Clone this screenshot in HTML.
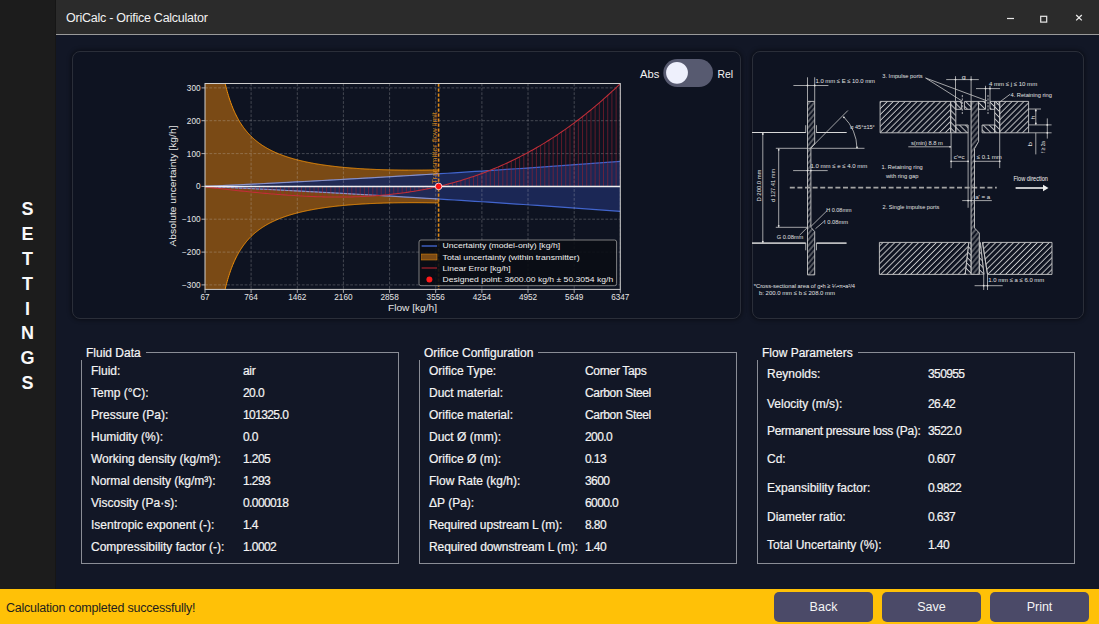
<!DOCTYPE html>
<html><head><meta charset="utf-8"><title>OriCalc - Orifice Calculator</title>
<style>
*{margin:0;padding:0;box-sizing:border-box}
html,body{width:1099px;height:624px;overflow:hidden;background:#121726;font-family:"Liberation Sans",sans-serif;color:#f0f0f0}
.abs{position:absolute}
#sidebar{left:0;top:0;width:55px;height:589px;background:#1c1c1c}
#sbedge{left:55px;top:0;width:1px;height:589px;background:#161616}
#sidebar span{position:absolute;left:0;width:55px;text-align:center;font-weight:bold;font-size:18px;color:#f8f8f8;line-height:18px}
#titlebar{left:56px;top:0;width:1044px;height:34px;background:#2b2b2b}
#titleline{left:56px;top:34px;width:1044px;height:1px;background:#9a9a9a}
#title{left:66px;top:11px;font-size:12.5px;color:#f2f2f2;white-space:nowrap;letter-spacing:-0.25px}
#main{left:56px;top:35px;width:1044px;height:554px;background:#121726}
.panel{border:1px solid #2a2e39;border-radius:8px;background:#0e1321;box-shadow:0 0 4px 1px rgba(0,0,0,0.45)}
.gb{border:1px solid #8a8d96}
.gbt{position:absolute;font-size:12px;color:#f6f6f6;-webkit-text-stroke:0.2px #f6f6f6;white-space:nowrap;background:#121726;padding:0 5px 0 5px}
.row{position:absolute;font-size:12px;color:#f4f4f4;white-space:nowrap;-webkit-text-stroke:0.2px #f4f4f4}
#status{left:0;top:589px;width:1099px;height:35px;background:#ffc107}
#stext{left:6px;top:601px;font-size:12.5px;color:#1e1e1e;white-space:nowrap;letter-spacing:-0.23px}
.btn{position:absolute;top:592px;width:99px;height:30px;background:#4b4a68;border-radius:5px;color:#f4f4f4;font-size:12.5px;text-align:center;line-height:30px}

</style></head><body>
<div id="sidebar" class="abs">
<span style="top:200.2px">S</span>
<span style="top:225.0px">E</span>
<span style="top:249.9px">T</span>
<span style="top:274.8px">T</span>
<span style="top:299.6px">I</span>
<span style="top:324.4px">N</span>
<span style="top:349.3px">G</span>
<span style="top:374.1px">S</span>
</div><div id="sbedge" class="abs"></div>
<div id="titlebar" class="abs"></div><div id="titleline" class="abs"></div>
<div id="title" class="abs">OriCalc - Orifice Calculator</div>
<svg class="abs" style="left:1000px;top:8px" width="99" height="20" viewBox="0 0 99 20"><line x1="7" y1="10.5" x2="14" y2="10.5" stroke="#e8e8e8" stroke-width="1.2"/><rect x="40.7" y="8.3" width="6" height="5.8" fill="none" stroke="#e8e8e8" stroke-width="1.2"/><path d="M76.2 7 L81.8 12.4 M81.8 7 L76.2 12.4" stroke="#ececec" stroke-width="1.25"/></svg>
<div id="main" class="abs"></div>
<div class="abs panel" style="left:72px;top:51px;width:669px;height:268px"></div>
<div class="abs panel" style="left:752px;top:51px;width:332px;height:268px"></div>
<svg class="abs" style="left:72px;top:51px" width="669" height="268" viewBox="72 51 669 268" font-family="Liberation Sans, sans-serif">
<defs><clipPath id="ax"><rect x="205.0" y="83.5" width="415.3" height="205.9"/></clipPath></defs>
<g clip-path="url(#ax)">
<polygon points="205.00,-384.45 205.58,-317.96 206.17,-265.34 206.75,-222.67 207.34,-187.36 207.92,-157.66 208.50,-132.34 209.09,-110.49 209.67,-91.44 210.26,-74.68 210.84,-59.84 211.43,-46.59 212.01,-34.69 212.59,-23.95 213.18,-14.21 213.76,-5.33 214.35,2.80 214.93,10.27 215.51,17.15 216.10,23.52 216.68,29.42 217.27,34.92 217.85,40.04 218.43,44.82 219.02,49.30 219.60,53.51 220.19,57.47 220.77,61.19 221.35,64.71 221.94,68.04 222.52,71.19 223.11,74.17 223.69,77.01 224.28,79.70 224.86,82.27 225.44,84.71 226.03,87.04 226.61,89.27 227.20,91.40 227.78,93.44 228.36,95.39 228.95,97.27 229.53,99.06 230.12,100.79 230.70,102.45 231.28,104.04 231.87,105.58 232.45,107.06 233.04,108.49 233.62,109.86 234.20,111.19 234.79,112.47 235.37,113.71 235.96,114.91 236.54,116.07 237.13,117.19 237.71,118.28 238.29,119.33 238.88,120.36 239.46,121.35 240.05,122.31 240.63,123.24 241.21,124.15 241.80,125.03 242.38,125.88 242.97,126.72 243.55,127.52 244.13,128.31 244.72,129.08 245.30,129.83 245.89,130.55 246.47,131.26 247.06,131.95 247.64,132.63 248.22,133.28 248.81,133.92 249.39,134.55 249.98,135.16 250.56,135.76 251.14,136.34 251.73,136.91 252.31,137.47 252.90,138.01 253.48,138.54 254.06,139.06 254.65,139.57 255.23,140.07 255.82,140.55 256.40,141.03 256.98,141.50 257.57,141.95 258.15,142.40 258.74,142.84 259.32,143.27 259.91,143.69 260.49,144.10 261.07,144.51 261.66,144.91 262.24,145.30 262.83,145.68 263.41,146.05 263.99,146.42 264.58,146.78 265.16,147.13 265.75,147.48 266.33,147.82 266.91,148.16 267.50,148.49 268.08,148.81 268.67,149.13 269.25,149.44 269.83,149.75 270.42,150.05 271.00,150.35 271.59,150.64 272.17,150.93 272.76,151.21 273.34,151.48 273.92,151.76 274.51,152.02 275.09,152.29 275.68,152.55 276.26,152.80 276.84,153.06 277.43,153.30 278.01,153.55 278.60,153.79 279.18,154.02 279.76,154.25 280.35,154.48 280.93,154.71 281.52,154.93 282.10,155.15 282.69,155.36 283.27,155.58 283.85,155.79 284.44,155.99 285.02,156.19 285.61,156.39 286.19,156.59 286.77,156.79 287.36,156.98 287.94,157.17 288.53,157.35 289.11,157.54 289.69,157.72 290.28,157.89 290.86,158.07 291.45,158.24 292.03,158.42 292.61,158.58 293.20,158.75 293.78,158.91 294.37,159.08 294.95,159.24 295.54,159.39 296.12,159.55 296.70,159.70 297.29,159.85 297.87,160.00 298.46,160.15 299.04,160.30 299.62,160.44 300.21,160.58 300.79,160.72 301.38,160.86 301.96,160.99 302.54,161.13 303.13,161.26 303.71,161.39 304.30,161.52 304.88,161.65 305.46,161.78 306.05,161.90 306.63,162.02 307.22,162.14 307.80,162.26 308.39,162.38 308.97,162.50 309.55,162.61 310.14,162.73 310.72,162.84 311.31,162.95 311.89,163.06 312.47,163.17 313.06,163.28 313.64,163.38 314.23,163.49 314.81,163.59 315.39,163.69 315.98,163.79 316.56,163.89 317.15,163.99 317.73,164.08 318.32,164.18 318.90,164.27 319.48,164.37 320.07,164.46 320.65,164.55 321.24,164.64 321.82,164.73 322.40,164.82 322.99,164.90 323.57,164.99 324.16,165.07 324.74,165.16 325.32,165.24 325.91,165.32 326.49,165.40 327.08,165.48 327.66,165.56 328.24,165.64 328.83,165.71 329.41,165.79 330.00,165.86 330.58,165.94 331.17,166.01 331.75,166.08 332.33,166.15 332.92,166.22 333.50,166.29 334.09,166.36 334.67,166.43 335.25,166.49 335.84,166.56 336.42,166.62 337.01,166.69 337.59,166.75 338.17,166.81 338.76,166.88 339.34,166.94 339.93,167.00 340.51,167.06 341.09,167.11 341.68,167.17 342.26,167.23 342.85,167.29 343.43,167.34 344.02,167.40 344.60,167.45 345.18,167.50 345.77,167.56 346.35,167.61 346.94,167.66 347.52,167.71 348.10,167.76 348.69,167.81 349.27,167.86 349.86,167.91 350.44,167.95 351.02,168.00 351.61,168.05 352.19,168.09 352.78,168.14 353.36,168.18 353.95,168.22 354.53,168.27 355.11,168.31 355.70,168.35 356.28,168.39 356.87,168.43 357.45,168.47 358.03,168.51 358.62,168.55 359.20,168.59 359.79,168.63 360.37,168.66 360.95,168.70 361.54,168.74 362.12,168.77 362.71,168.81 363.29,168.84 363.87,168.87 364.46,168.91 365.04,168.94 365.63,168.97 366.21,169.00 366.80,169.03 367.38,169.06 367.96,169.09 368.55,169.12 369.13,169.15 369.72,169.18 370.30,169.21 370.88,169.24 371.47,169.26 372.05,169.29 372.64,169.32 373.22,169.34 373.80,169.37 374.39,169.39 374.97,169.42 375.56,169.44 376.14,169.46 376.72,169.49 377.31,169.51 377.89,169.53 378.48,169.55 379.06,169.57 379.65,169.59 380.23,169.61 380.81,169.63 381.40,169.65 381.98,169.67 382.57,169.69 383.15,169.71 383.73,169.73 384.32,169.74 384.90,169.76 385.49,169.78 386.07,169.79 386.65,169.81 387.24,169.82 387.82,169.84 388.41,169.85 388.99,169.87 389.58,169.88 390.16,169.89 390.74,169.91 391.33,169.92 391.91,169.93 392.50,169.94 393.08,169.95 393.66,169.96 394.25,169.98 394.83,169.99 395.42,170.00 396.00,170.00 396.58,170.01 397.17,170.02 397.75,170.03 398.34,170.04 398.92,170.05 399.50,170.05 400.09,170.06 400.67,170.07 401.26,170.08 401.84,170.08 402.43,170.09 403.01,170.09 403.59,170.10 404.18,170.10 404.76,170.11 405.35,170.11 405.93,170.12 406.51,170.12 407.10,170.12 407.68,170.12 408.27,170.13 408.85,170.13 409.43,170.13 410.02,170.13 410.60,170.13 411.19,170.14 411.77,170.14 412.35,170.14 412.94,170.14 413.52,170.14 414.11,170.14 414.69,170.14 415.28,170.14 415.86,170.13 416.44,170.13 417.03,170.13 417.61,170.13 418.20,170.13 418.78,170.12 419.36,170.12 419.95,170.12 420.53,170.11 421.12,170.11 421.70,170.11 422.28,170.10 422.87,170.10 423.45,170.09 424.04,170.09 424.62,170.08 425.21,170.08 425.79,170.07 426.37,170.07 426.96,170.06 427.54,170.05 428.13,170.05 428.71,170.04 429.29,170.03 429.88,170.03 430.46,170.02 431.05,170.01 431.63,170.00 432.21,169.99 432.80,169.99 433.38,169.98 433.97,169.97 434.55,169.96 435.13,169.95 435.72,169.94 436.30,169.93 436.89,169.92 437.47,169.91 438.06,169.90 438.64,169.89 438.64,202.91 438.06,202.90 437.47,202.89 436.89,202.88 436.30,202.87 435.72,202.86 435.13,202.85 434.55,202.84 433.97,202.83 433.38,202.82 432.80,202.81 432.21,202.81 431.63,202.80 431.05,202.79 430.46,202.78 429.88,202.77 429.29,202.77 428.71,202.76 428.13,202.75 427.54,202.75 426.96,202.74 426.37,202.73 425.79,202.73 425.21,202.72 424.62,202.72 424.04,202.71 423.45,202.71 422.87,202.70 422.28,202.70 421.70,202.69 421.12,202.69 420.53,202.69 419.95,202.68 419.36,202.68 418.78,202.68 418.20,202.67 417.61,202.67 417.03,202.67 416.44,202.67 415.86,202.67 415.28,202.66 414.69,202.66 414.11,202.66 413.52,202.66 412.94,202.66 412.35,202.66 411.77,202.66 411.19,202.66 410.60,202.67 410.02,202.67 409.43,202.67 408.85,202.67 408.27,202.67 407.68,202.68 407.10,202.68 406.51,202.68 405.93,202.68 405.35,202.69 404.76,202.69 404.18,202.70 403.59,202.70 403.01,202.71 402.43,202.71 401.84,202.72 401.26,202.72 400.67,202.73 400.09,202.74 399.50,202.75 398.92,202.75 398.34,202.76 397.75,202.77 397.17,202.78 396.58,202.79 396.00,202.80 395.42,202.80 394.83,202.81 394.25,202.82 393.66,202.84 393.08,202.85 392.50,202.86 391.91,202.87 391.33,202.88 390.74,202.89 390.16,202.91 389.58,202.92 388.99,202.93 388.41,202.95 387.82,202.96 387.24,202.98 386.65,202.99 386.07,203.01 385.49,203.02 384.90,203.04 384.32,203.06 383.73,203.07 383.15,203.09 382.57,203.11 381.98,203.13 381.40,203.15 380.81,203.17 380.23,203.19 379.65,203.21 379.06,203.23 378.48,203.25 377.89,203.27 377.31,203.29 376.72,203.31 376.14,203.34 375.56,203.36 374.97,203.38 374.39,203.41 373.80,203.43 373.22,203.46 372.64,203.48 372.05,203.51 371.47,203.54 370.88,203.56 370.30,203.59 369.72,203.62 369.13,203.65 368.55,203.68 367.96,203.71 367.38,203.74 366.80,203.77 366.21,203.80 365.63,203.83 365.04,203.86 364.46,203.89 363.87,203.93 363.29,203.96 362.71,203.99 362.12,204.03 361.54,204.06 360.95,204.10 360.37,204.14 359.79,204.17 359.20,204.21 358.62,204.25 358.03,204.29 357.45,204.33 356.87,204.37 356.28,204.41 355.70,204.45 355.11,204.49 354.53,204.53 353.95,204.58 353.36,204.62 352.78,204.66 352.19,204.71 351.61,204.75 351.02,204.80 350.44,204.85 349.86,204.89 349.27,204.94 348.69,204.99 348.10,205.04 347.52,205.09 346.94,205.14 346.35,205.19 345.77,205.24 345.18,205.30 344.60,205.35 344.02,205.40 343.43,205.46 342.85,205.51 342.26,205.57 341.68,205.63 341.09,205.69 340.51,205.74 339.93,205.80 339.34,205.86 338.76,205.92 338.17,205.99 337.59,206.05 337.01,206.11 336.42,206.18 335.84,206.24 335.25,206.31 334.67,206.37 334.09,206.44 333.50,206.51 332.92,206.58 332.33,206.65 331.75,206.72 331.17,206.79 330.58,206.86 330.00,206.94 329.41,207.01 328.83,207.09 328.24,207.16 327.66,207.24 327.08,207.32 326.49,207.40 325.91,207.48 325.32,207.56 324.74,207.64 324.16,207.73 323.57,207.81 322.99,207.90 322.40,207.98 321.82,208.07 321.24,208.16 320.65,208.25 320.07,208.34 319.48,208.43 318.90,208.53 318.32,208.62 317.73,208.72 317.15,208.81 316.56,208.91 315.98,209.01 315.39,209.11 314.81,209.21 314.23,209.31 313.64,209.42 313.06,209.52 312.47,209.63 311.89,209.74 311.31,209.85 310.72,209.96 310.14,210.07 309.55,210.19 308.97,210.30 308.39,210.42 307.80,210.54 307.22,210.66 306.63,210.78 306.05,210.90 305.46,211.02 304.88,211.15 304.30,211.28 303.71,211.41 303.13,211.54 302.54,211.67 301.96,211.81 301.38,211.94 300.79,212.08 300.21,212.22 299.62,212.36 299.04,212.50 298.46,212.65 297.87,212.80 297.29,212.95 296.70,213.10 296.12,213.25 295.54,213.41 294.95,213.56 294.37,213.72 293.78,213.89 293.20,214.05 292.61,214.22 292.03,214.38 291.45,214.56 290.86,214.73 290.28,214.91 289.69,215.08 289.11,215.26 288.53,215.45 287.94,215.63 287.36,215.82 286.77,216.01 286.19,216.21 285.61,216.41 285.02,216.61 284.44,216.81 283.85,217.01 283.27,217.22 282.69,217.44 282.10,217.65 281.52,217.87 280.93,218.09 280.35,218.32 279.76,218.55 279.18,218.78 278.60,219.01 278.01,219.25 277.43,219.50 276.84,219.74 276.26,220.00 275.68,220.25 275.09,220.51 274.51,220.78 273.92,221.04 273.34,221.32 272.76,221.59 272.17,221.87 271.59,222.16 271.00,222.45 270.42,222.75 269.83,223.05 269.25,223.36 268.67,223.67 268.08,223.99 267.50,224.31 266.91,224.64 266.33,224.98 265.75,225.32 265.16,225.67 264.58,226.02 263.99,226.38 263.41,226.75 262.83,227.12 262.24,227.50 261.66,227.89 261.07,228.29 260.49,228.70 259.91,229.11 259.32,229.53 258.74,229.96 258.15,230.40 257.57,230.85 256.98,231.30 256.40,231.77 255.82,232.25 255.23,232.73 254.65,233.23 254.06,233.74 253.48,234.26 252.90,234.79 252.31,235.33 251.73,235.89 251.14,236.46 250.56,237.04 249.98,237.64 249.39,238.25 248.81,238.88 248.22,239.52 247.64,240.17 247.06,240.85 246.47,241.54 245.89,242.25 245.30,242.97 244.72,243.72 244.13,244.49 243.55,245.28 242.97,246.08 242.38,246.92 241.80,247.77 241.21,248.65 240.63,249.56 240.05,250.49 239.46,251.45 238.88,252.44 238.29,253.47 237.71,254.52 237.13,255.61 236.54,256.73 235.96,257.89 235.37,259.09 234.79,260.33 234.20,261.61 233.62,262.94 233.04,264.31 232.45,265.74 231.87,267.22 231.28,268.76 230.70,270.35 230.12,272.01 229.53,273.74 228.95,275.53 228.36,277.41 227.78,279.36 227.20,281.40 226.61,283.53 226.03,285.76 225.44,288.09 224.86,290.53 224.28,293.10 223.69,295.79 223.11,298.63 222.52,301.61 221.94,304.76 221.35,308.09 220.77,311.61 220.19,315.33 219.60,319.29 219.02,323.50 218.43,327.98 217.85,332.76 217.27,337.88 216.68,343.38 216.10,349.28 215.51,355.65 214.93,362.53 214.35,370.00 213.76,378.13 213.18,387.01 212.59,396.75 212.01,407.49 211.43,419.39 210.84,432.64 210.26,447.48 209.67,464.24 209.09,483.29 208.50,505.14 207.92,530.46 207.34,560.16 206.75,595.47 206.17,638.14 205.58,690.76 205.00,757.25" fill="#7a4a15"/>
<polyline points="205.00,-384.45 205.58,-317.96 206.17,-265.34 206.75,-222.67 207.34,-187.36 207.92,-157.66 208.50,-132.34 209.09,-110.49 209.67,-91.44 210.26,-74.68 210.84,-59.84 211.43,-46.59 212.01,-34.69 212.59,-23.95 213.18,-14.21 213.76,-5.33 214.35,2.80 214.93,10.27 215.51,17.15 216.10,23.52 216.68,29.42 217.27,34.92 217.85,40.04 218.43,44.82 219.02,49.30 219.60,53.51 220.19,57.47 220.77,61.19 221.35,64.71 221.94,68.04 222.52,71.19 223.11,74.17 223.69,77.01 224.28,79.70 224.86,82.27 225.44,84.71 226.03,87.04 226.61,89.27 227.20,91.40 227.78,93.44 228.36,95.39 228.95,97.27 229.53,99.06 230.12,100.79 230.70,102.45 231.28,104.04 231.87,105.58 232.45,107.06 233.04,108.49 233.62,109.86 234.20,111.19 234.79,112.47 235.37,113.71 235.96,114.91 236.54,116.07 237.13,117.19 237.71,118.28 238.29,119.33 238.88,120.36 239.46,121.35 240.05,122.31 240.63,123.24 241.21,124.15 241.80,125.03 242.38,125.88 242.97,126.72 243.55,127.52 244.13,128.31 244.72,129.08 245.30,129.83 245.89,130.55 246.47,131.26 247.06,131.95 247.64,132.63 248.22,133.28 248.81,133.92 249.39,134.55 249.98,135.16 250.56,135.76 251.14,136.34 251.73,136.91 252.31,137.47 252.90,138.01 253.48,138.54 254.06,139.06 254.65,139.57 255.23,140.07 255.82,140.55 256.40,141.03 256.98,141.50 257.57,141.95 258.15,142.40 258.74,142.84 259.32,143.27 259.91,143.69 260.49,144.10 261.07,144.51 261.66,144.91 262.24,145.30 262.83,145.68 263.41,146.05 263.99,146.42 264.58,146.78 265.16,147.13 265.75,147.48 266.33,147.82 266.91,148.16 267.50,148.49 268.08,148.81 268.67,149.13 269.25,149.44 269.83,149.75 270.42,150.05 271.00,150.35 271.59,150.64 272.17,150.93 272.76,151.21 273.34,151.48 273.92,151.76 274.51,152.02 275.09,152.29 275.68,152.55 276.26,152.80 276.84,153.06 277.43,153.30 278.01,153.55 278.60,153.79 279.18,154.02 279.76,154.25 280.35,154.48 280.93,154.71 281.52,154.93 282.10,155.15 282.69,155.36 283.27,155.58 283.85,155.79 284.44,155.99 285.02,156.19 285.61,156.39 286.19,156.59 286.77,156.79 287.36,156.98 287.94,157.17 288.53,157.35 289.11,157.54 289.69,157.72 290.28,157.89 290.86,158.07 291.45,158.24 292.03,158.42 292.61,158.58 293.20,158.75 293.78,158.91 294.37,159.08 294.95,159.24 295.54,159.39 296.12,159.55 296.70,159.70 297.29,159.85 297.87,160.00 298.46,160.15 299.04,160.30 299.62,160.44 300.21,160.58 300.79,160.72 301.38,160.86 301.96,160.99 302.54,161.13 303.13,161.26 303.71,161.39 304.30,161.52 304.88,161.65 305.46,161.78 306.05,161.90 306.63,162.02 307.22,162.14 307.80,162.26 308.39,162.38 308.97,162.50 309.55,162.61 310.14,162.73 310.72,162.84 311.31,162.95 311.89,163.06 312.47,163.17 313.06,163.28 313.64,163.38 314.23,163.49 314.81,163.59 315.39,163.69 315.98,163.79 316.56,163.89 317.15,163.99 317.73,164.08 318.32,164.18 318.90,164.27 319.48,164.37 320.07,164.46 320.65,164.55 321.24,164.64 321.82,164.73 322.40,164.82 322.99,164.90 323.57,164.99 324.16,165.07 324.74,165.16 325.32,165.24 325.91,165.32 326.49,165.40 327.08,165.48 327.66,165.56 328.24,165.64 328.83,165.71 329.41,165.79 330.00,165.86 330.58,165.94 331.17,166.01 331.75,166.08 332.33,166.15 332.92,166.22 333.50,166.29 334.09,166.36 334.67,166.43 335.25,166.49 335.84,166.56 336.42,166.62 337.01,166.69 337.59,166.75 338.17,166.81 338.76,166.88 339.34,166.94 339.93,167.00 340.51,167.06 341.09,167.11 341.68,167.17 342.26,167.23 342.85,167.29 343.43,167.34 344.02,167.40 344.60,167.45 345.18,167.50 345.77,167.56 346.35,167.61 346.94,167.66 347.52,167.71 348.10,167.76 348.69,167.81 349.27,167.86 349.86,167.91 350.44,167.95 351.02,168.00 351.61,168.05 352.19,168.09 352.78,168.14 353.36,168.18 353.95,168.22 354.53,168.27 355.11,168.31 355.70,168.35 356.28,168.39 356.87,168.43 357.45,168.47 358.03,168.51 358.62,168.55 359.20,168.59 359.79,168.63 360.37,168.66 360.95,168.70 361.54,168.74 362.12,168.77 362.71,168.81 363.29,168.84 363.87,168.87 364.46,168.91 365.04,168.94 365.63,168.97 366.21,169.00 366.80,169.03 367.38,169.06 367.96,169.09 368.55,169.12 369.13,169.15 369.72,169.18 370.30,169.21 370.88,169.24 371.47,169.26 372.05,169.29 372.64,169.32 373.22,169.34 373.80,169.37 374.39,169.39 374.97,169.42 375.56,169.44 376.14,169.46 376.72,169.49 377.31,169.51 377.89,169.53 378.48,169.55 379.06,169.57 379.65,169.59 380.23,169.61 380.81,169.63 381.40,169.65 381.98,169.67 382.57,169.69 383.15,169.71 383.73,169.73 384.32,169.74 384.90,169.76 385.49,169.78 386.07,169.79 386.65,169.81 387.24,169.82 387.82,169.84 388.41,169.85 388.99,169.87 389.58,169.88 390.16,169.89 390.74,169.91 391.33,169.92 391.91,169.93 392.50,169.94 393.08,169.95 393.66,169.96 394.25,169.98 394.83,169.99 395.42,170.00 396.00,170.00 396.58,170.01 397.17,170.02 397.75,170.03 398.34,170.04 398.92,170.05 399.50,170.05 400.09,170.06 400.67,170.07 401.26,170.08 401.84,170.08 402.43,170.09 403.01,170.09 403.59,170.10 404.18,170.10 404.76,170.11 405.35,170.11 405.93,170.12 406.51,170.12 407.10,170.12 407.68,170.12 408.27,170.13 408.85,170.13 409.43,170.13 410.02,170.13 410.60,170.13 411.19,170.14 411.77,170.14 412.35,170.14 412.94,170.14 413.52,170.14 414.11,170.14 414.69,170.14 415.28,170.14 415.86,170.13 416.44,170.13 417.03,170.13 417.61,170.13 418.20,170.13 418.78,170.12 419.36,170.12 419.95,170.12 420.53,170.11 421.12,170.11 421.70,170.11 422.28,170.10 422.87,170.10 423.45,170.09 424.04,170.09 424.62,170.08 425.21,170.08 425.79,170.07 426.37,170.07 426.96,170.06 427.54,170.05 428.13,170.05 428.71,170.04 429.29,170.03 429.88,170.03 430.46,170.02 431.05,170.01 431.63,170.00 432.21,169.99 432.80,169.99 433.38,169.98 433.97,169.97 434.55,169.96 435.13,169.95 435.72,169.94 436.30,169.93 436.89,169.92 437.47,169.91 438.06,169.90 438.64,169.89" fill="none" stroke="#f0900a" stroke-width="1"/>
<polyline points="438.64,202.91 438.06,202.90 437.47,202.89 436.89,202.88 436.30,202.87 435.72,202.86 435.13,202.85 434.55,202.84 433.97,202.83 433.38,202.82 432.80,202.81 432.21,202.81 431.63,202.80 431.05,202.79 430.46,202.78 429.88,202.77 429.29,202.77 428.71,202.76 428.13,202.75 427.54,202.75 426.96,202.74 426.37,202.73 425.79,202.73 425.21,202.72 424.62,202.72 424.04,202.71 423.45,202.71 422.87,202.70 422.28,202.70 421.70,202.69 421.12,202.69 420.53,202.69 419.95,202.68 419.36,202.68 418.78,202.68 418.20,202.67 417.61,202.67 417.03,202.67 416.44,202.67 415.86,202.67 415.28,202.66 414.69,202.66 414.11,202.66 413.52,202.66 412.94,202.66 412.35,202.66 411.77,202.66 411.19,202.66 410.60,202.67 410.02,202.67 409.43,202.67 408.85,202.67 408.27,202.67 407.68,202.68 407.10,202.68 406.51,202.68 405.93,202.68 405.35,202.69 404.76,202.69 404.18,202.70 403.59,202.70 403.01,202.71 402.43,202.71 401.84,202.72 401.26,202.72 400.67,202.73 400.09,202.74 399.50,202.75 398.92,202.75 398.34,202.76 397.75,202.77 397.17,202.78 396.58,202.79 396.00,202.80 395.42,202.80 394.83,202.81 394.25,202.82 393.66,202.84 393.08,202.85 392.50,202.86 391.91,202.87 391.33,202.88 390.74,202.89 390.16,202.91 389.58,202.92 388.99,202.93 388.41,202.95 387.82,202.96 387.24,202.98 386.65,202.99 386.07,203.01 385.49,203.02 384.90,203.04 384.32,203.06 383.73,203.07 383.15,203.09 382.57,203.11 381.98,203.13 381.40,203.15 380.81,203.17 380.23,203.19 379.65,203.21 379.06,203.23 378.48,203.25 377.89,203.27 377.31,203.29 376.72,203.31 376.14,203.34 375.56,203.36 374.97,203.38 374.39,203.41 373.80,203.43 373.22,203.46 372.64,203.48 372.05,203.51 371.47,203.54 370.88,203.56 370.30,203.59 369.72,203.62 369.13,203.65 368.55,203.68 367.96,203.71 367.38,203.74 366.80,203.77 366.21,203.80 365.63,203.83 365.04,203.86 364.46,203.89 363.87,203.93 363.29,203.96 362.71,203.99 362.12,204.03 361.54,204.06 360.95,204.10 360.37,204.14 359.79,204.17 359.20,204.21 358.62,204.25 358.03,204.29 357.45,204.33 356.87,204.37 356.28,204.41 355.70,204.45 355.11,204.49 354.53,204.53 353.95,204.58 353.36,204.62 352.78,204.66 352.19,204.71 351.61,204.75 351.02,204.80 350.44,204.85 349.86,204.89 349.27,204.94 348.69,204.99 348.10,205.04 347.52,205.09 346.94,205.14 346.35,205.19 345.77,205.24 345.18,205.30 344.60,205.35 344.02,205.40 343.43,205.46 342.85,205.51 342.26,205.57 341.68,205.63 341.09,205.69 340.51,205.74 339.93,205.80 339.34,205.86 338.76,205.92 338.17,205.99 337.59,206.05 337.01,206.11 336.42,206.18 335.84,206.24 335.25,206.31 334.67,206.37 334.09,206.44 333.50,206.51 332.92,206.58 332.33,206.65 331.75,206.72 331.17,206.79 330.58,206.86 330.00,206.94 329.41,207.01 328.83,207.09 328.24,207.16 327.66,207.24 327.08,207.32 326.49,207.40 325.91,207.48 325.32,207.56 324.74,207.64 324.16,207.73 323.57,207.81 322.99,207.90 322.40,207.98 321.82,208.07 321.24,208.16 320.65,208.25 320.07,208.34 319.48,208.43 318.90,208.53 318.32,208.62 317.73,208.72 317.15,208.81 316.56,208.91 315.98,209.01 315.39,209.11 314.81,209.21 314.23,209.31 313.64,209.42 313.06,209.52 312.47,209.63 311.89,209.74 311.31,209.85 310.72,209.96 310.14,210.07 309.55,210.19 308.97,210.30 308.39,210.42 307.80,210.54 307.22,210.66 306.63,210.78 306.05,210.90 305.46,211.02 304.88,211.15 304.30,211.28 303.71,211.41 303.13,211.54 302.54,211.67 301.96,211.81 301.38,211.94 300.79,212.08 300.21,212.22 299.62,212.36 299.04,212.50 298.46,212.65 297.87,212.80 297.29,212.95 296.70,213.10 296.12,213.25 295.54,213.41 294.95,213.56 294.37,213.72 293.78,213.89 293.20,214.05 292.61,214.22 292.03,214.38 291.45,214.56 290.86,214.73 290.28,214.91 289.69,215.08 289.11,215.26 288.53,215.45 287.94,215.63 287.36,215.82 286.77,216.01 286.19,216.21 285.61,216.41 285.02,216.61 284.44,216.81 283.85,217.01 283.27,217.22 282.69,217.44 282.10,217.65 281.52,217.87 280.93,218.09 280.35,218.32 279.76,218.55 279.18,218.78 278.60,219.01 278.01,219.25 277.43,219.50 276.84,219.74 276.26,220.00 275.68,220.25 275.09,220.51 274.51,220.78 273.92,221.04 273.34,221.32 272.76,221.59 272.17,221.87 271.59,222.16 271.00,222.45 270.42,222.75 269.83,223.05 269.25,223.36 268.67,223.67 268.08,223.99 267.50,224.31 266.91,224.64 266.33,224.98 265.75,225.32 265.16,225.67 264.58,226.02 263.99,226.38 263.41,226.75 262.83,227.12 262.24,227.50 261.66,227.89 261.07,228.29 260.49,228.70 259.91,229.11 259.32,229.53 258.74,229.96 258.15,230.40 257.57,230.85 256.98,231.30 256.40,231.77 255.82,232.25 255.23,232.73 254.65,233.23 254.06,233.74 253.48,234.26 252.90,234.79 252.31,235.33 251.73,235.89 251.14,236.46 250.56,237.04 249.98,237.64 249.39,238.25 248.81,238.88 248.22,239.52 247.64,240.17 247.06,240.85 246.47,241.54 245.89,242.25 245.30,242.97 244.72,243.72 244.13,244.49 243.55,245.28 242.97,246.08 242.38,246.92 241.80,247.77 241.21,248.65 240.63,249.56 240.05,250.49 239.46,251.45 238.88,252.44 238.29,253.47 237.71,254.52 237.13,255.61 236.54,256.73 235.96,257.89 235.37,259.09 234.79,260.33 234.20,261.61 233.62,262.94 233.04,264.31 232.45,265.74 231.87,267.22 231.28,268.76 230.70,270.35 230.12,272.01 229.53,273.74 228.95,275.53 228.36,277.41 227.78,279.36 227.20,281.40 226.61,283.53 226.03,285.76 225.44,288.09 224.86,290.53 224.28,293.10 223.69,295.79 223.11,298.63 222.52,301.61 221.94,304.76 221.35,308.09 220.77,311.61 220.19,315.33 219.60,319.29 219.02,323.50 218.43,327.98 217.85,332.76 217.27,337.88 216.68,343.38 216.10,349.28 215.51,355.65 214.93,362.53 214.35,370.00 213.76,378.13 213.18,387.01 212.59,396.75 212.01,407.49 211.43,419.39 210.84,432.64 210.26,447.48 209.67,464.24 209.09,483.29 208.50,505.14 207.92,530.46 207.34,560.16 206.75,595.47 206.17,638.14 205.58,690.76 205.00,757.25" fill="none" stroke="#f0900a" stroke-width="1"/>
<polygon points="205.00,186.40 211.92,186.08 218.84,185.75 225.76,185.42 232.69,185.09 239.61,184.75 246.53,184.42 253.45,184.07 260.37,183.73 267.30,183.38 274.22,183.03 281.14,182.68 288.06,182.32 294.98,181.96 301.90,181.59 308.82,181.23 315.75,180.86 322.67,180.48 329.59,180.11 336.51,179.73 343.43,179.34 350.36,178.96 357.28,178.57 364.20,178.18 371.12,177.78 378.04,177.38 384.96,176.98 391.88,176.58 398.81,176.17 405.73,175.76 412.65,175.34 419.57,174.93 426.49,174.51 433.41,174.08 440.34,173.66 447.26,173.23 454.18,172.79 461.10,172.36 468.02,171.92 474.94,171.47 481.87,171.03 488.79,170.58 495.71,170.13 502.63,169.67 509.55,169.21 516.47,168.75 523.40,168.29 530.32,167.82 537.24,167.35 544.16,166.87 551.08,166.40 558.00,165.91 564.93,165.43 571.85,164.94 578.77,164.45 585.69,163.96 592.61,163.46 599.53,162.97 606.46,162.46 613.38,161.96 620.30,161.45 620.30,211.35 613.38,210.84 606.46,210.34 599.53,209.83 592.61,209.34 585.69,208.84 578.77,208.35 571.85,207.86 564.93,207.37 558.00,206.89 551.08,206.40 544.16,205.93 537.24,205.45 530.32,204.98 523.40,204.51 516.47,204.05 509.55,203.59 502.63,203.13 495.71,202.67 488.79,202.22 481.87,201.77 474.94,201.33 468.02,200.88 461.10,200.44 454.18,200.01 447.26,199.57 440.34,199.14 433.41,198.72 426.49,198.29 419.57,197.87 412.65,197.46 405.73,197.04 398.81,196.63 391.88,196.22 384.96,195.82 378.04,195.42 371.12,195.02 364.20,194.62 357.28,194.23 350.36,193.84 343.43,193.46 336.51,193.07 329.59,192.69 322.67,192.32 315.75,191.94 308.82,191.57 301.90,191.21 294.98,190.84 288.06,190.48 281.14,190.12 274.22,189.77 267.30,189.42 260.37,189.07 253.45,188.73 246.53,188.38 239.61,188.05 232.69,187.71 225.76,187.38 218.84,187.05 211.92,186.72 205.00,186.40" fill="#1c2858" fill-opacity="0.95"/>
<polyline points="205.00,186.40 211.92,186.08 218.84,185.75 225.76,185.42 232.69,185.09 239.61,184.75 246.53,184.42 253.45,184.07 260.37,183.73 267.30,183.38 274.22,183.03 281.14,182.68 288.06,182.32 294.98,181.96 301.90,181.59 308.82,181.23 315.75,180.86 322.67,180.48 329.59,180.11 336.51,179.73 343.43,179.34 350.36,178.96 357.28,178.57 364.20,178.18 371.12,177.78 378.04,177.38 384.96,176.98 391.88,176.58 398.81,176.17 405.73,175.76 412.65,175.34 419.57,174.93 426.49,174.51 433.41,174.08 440.34,173.66 447.26,173.23 454.18,172.79 461.10,172.36 468.02,171.92 474.94,171.47 481.87,171.03 488.79,170.58 495.71,170.13 502.63,169.67 509.55,169.21 516.47,168.75 523.40,168.29 530.32,167.82 537.24,167.35 544.16,166.87 551.08,166.40 558.00,165.91 564.93,165.43 571.85,164.94 578.77,164.45 585.69,163.96 592.61,163.46 599.53,162.97 606.46,162.46 613.38,161.96 620.30,161.45" fill="none" stroke="#4a72e8" stroke-width="1.2" stroke-opacity="0.85"/>
<polyline points="620.30,211.35 613.38,210.84 606.46,210.34 599.53,209.83 592.61,209.34 585.69,208.84 578.77,208.35 571.85,207.86 564.93,207.37 558.00,206.89 551.08,206.40 544.16,205.93 537.24,205.45 530.32,204.98 523.40,204.51 516.47,204.05 509.55,203.59 502.63,203.13 495.71,202.67 488.79,202.22 481.87,201.77 474.94,201.33 468.02,200.88 461.10,200.44 454.18,200.01 447.26,199.57 440.34,199.14 433.41,198.72 426.49,198.29 419.57,197.87 412.65,197.46 405.73,197.04 398.81,196.63 391.88,196.22 384.96,195.82 378.04,195.42 371.12,195.02 364.20,194.62 357.28,194.23 350.36,193.84 343.43,193.46 336.51,193.07 329.59,192.69 322.67,192.32 315.75,191.94 308.82,191.57 301.90,191.21 294.98,190.84 288.06,190.48 281.14,190.12 274.22,189.77 267.30,189.42 260.37,189.07 253.45,188.73 246.53,188.38 239.61,188.05 232.69,187.71 225.76,187.38 218.84,187.05 211.92,186.72 205.00,186.40" fill="none" stroke="#4a72e8" stroke-width="1.2" stroke-opacity="0.85"/>
<polyline points="205.00,186.40 210.84,186.13 216.68,185.85 222.52,185.58 228.36,185.30 234.20,185.02 240.05,184.73 245.89,184.45 251.73,184.16 257.57,183.87 263.41,183.58 269.25,183.28 275.09,182.99 280.93,182.69 286.77,182.38 292.61,182.08 298.46,181.78 304.30,181.47 310.14,181.16 315.98,180.84 321.82,180.53 327.66,180.21 333.50,179.89 339.34,179.57 345.18,179.25 351.02,178.92 356.87,178.59 362.71,178.26 368.55,177.93 374.39,177.59 380.23,177.26 386.07,176.92 391.91,176.58 397.75,176.23 403.59,175.89 409.43,175.54 415.28,175.19 421.12,174.83 426.96,174.48 432.80,174.12 438.64,173.76" fill="none" stroke="#d8c0b8" stroke-width="0.9" stroke-opacity="0.55"/>
<polyline points="205.00,186.40 210.84,186.67 216.68,186.95 222.52,187.22 228.36,187.50 234.20,187.78 240.05,188.07 245.89,188.35 251.73,188.64 257.57,188.93 263.41,189.22 269.25,189.52 275.09,189.81 280.93,190.11 286.77,190.42 292.61,190.72 298.46,191.02 304.30,191.33 310.14,191.64 315.98,191.96 321.82,192.27 327.66,192.59 333.50,192.91 339.34,193.23 345.18,193.55 351.02,193.88 356.87,194.21 362.71,194.54 368.55,194.87 374.39,195.21 380.23,195.54 386.07,195.88 391.91,196.22 397.75,196.57 403.59,196.91 409.43,197.26 415.28,197.61 421.12,197.97 426.96,198.32 432.80,198.68 438.64,199.04" fill="none" stroke="#d8c0b8" stroke-width="0.9" stroke-opacity="0.55"/>
<path d="M251.1 83.5V289.4M297.3 83.5V289.4M343.4 83.5V289.4M389.6 83.5V289.4M435.7 83.5V289.4M481.9 83.5V289.4M528.0 83.5V289.4M574.2 83.5V289.4M620.3 83.5V289.4M205.0 284.9H620.3M205.0 252.1H620.3M205.0 219.2H620.3M205.0 186.4H620.3M205.0 153.6H620.3M205.0 120.7H620.3M205.0 87.9H620.3" stroke="#d0d0d0" stroke-opacity="0.4" stroke-width="0.7" stroke-dasharray="2.8,1.6" fill="none"/>
<path d="M205.00 186.40V186.91M209.19 186.40V187.40M213.39 186.40V187.89M217.58 186.40V188.37M221.78 186.40V188.84M225.97 186.40V189.32M230.17 186.40V189.79M234.36 186.40V190.25M238.56 186.40V190.70M242.75 186.40V191.15M246.95 186.40V191.58M251.14 186.40V192.01M255.34 186.40V192.43M259.53 186.40V192.83M263.73 186.40V193.22M267.92 186.40V193.60M272.12 186.40V193.96M276.31 186.40V194.31M280.51 186.40V194.64M284.70 186.40V194.95M288.90 186.40V195.25M293.09 186.40V195.52M297.29 186.40V195.78M301.48 186.40V196.02M305.68 186.40V196.23M309.87 186.40V196.42M314.07 186.40V196.59M318.26 186.40V196.73M322.46 186.40V196.85M326.65 186.40V196.94M330.85 186.40V197.00M335.04 186.40V197.04M339.24 186.40V197.04M343.43 186.40V197.02M347.63 186.40V196.96M351.82 186.40V196.88M356.02 186.40V196.76M360.21 186.40V196.61M364.41 186.40V196.42M368.60 186.40V196.20M372.80 186.40V195.94M376.99 186.40V195.64M381.19 186.40V195.30M385.38 186.40V194.93M389.58 186.40V194.52M393.77 186.40V194.06M397.97 186.40V193.57M402.16 186.40V193.03M406.36 186.40V192.44M410.55 186.40V191.82M414.75 186.40V191.14M418.94 186.40V190.42M423.14 186.40V189.66M427.33 186.40V188.84M431.53 186.40V187.98M435.72 186.40V187.07M439.92 186.40V186.10M444.11 186.40V185.08M448.31 186.40V184.02M452.50 186.40V182.89M456.70 186.40V181.72M460.89 186.40V180.48M465.09 186.40V179.19M469.28 186.40V177.85M473.48 186.40V176.44M477.67 186.40V174.98M481.87 186.40V173.46M486.06 186.40V171.87M490.26 186.40V170.23M494.45 186.40V168.52M498.65 186.40V166.74M502.84 186.40V164.91M507.04 186.40V163.00M511.23 186.40V161.04M515.43 186.40V159.00M519.62 186.40V156.90M523.82 186.40V154.72M528.01 186.40V152.48M532.21 186.40V150.17M536.40 186.40V147.78M540.60 186.40V145.32M544.79 186.40V142.79M548.99 186.40V140.18M553.18 186.40V137.50M557.38 186.40V134.74M561.57 186.40V131.91M565.77 186.40V129.00M569.96 186.40V126.00M574.16 186.40V122.93M578.35 186.40V119.78M582.55 186.40V116.54M586.74 186.40V113.22M590.94 186.40V109.82M595.13 186.40V106.34M599.33 186.40V102.77M603.52 186.40V99.11M607.72 186.40V95.36M611.91 186.40V91.53M616.11 186.40V87.61M620.30 186.40V83.60" stroke="#a02030" stroke-opacity="0.75" stroke-width="0.75" fill="none"/>
<polyline points="205.00,186.91 207.08,187.16 209.15,187.40 211.23,187.64 213.31,187.88 215.38,188.11 217.46,188.35 219.54,188.59 221.61,188.83 223.69,189.06 225.76,189.29 227.84,189.53 229.92,189.76 231.99,189.99 234.07,190.21 236.15,190.44 238.22,190.66 240.30,190.89 242.38,191.11 244.45,191.32 246.53,191.54 248.61,191.75 250.68,191.96 252.76,192.17 254.84,192.38 256.91,192.58 258.99,192.78 261.07,192.97 263.14,193.17 265.22,193.36 267.30,193.54 269.37,193.73 271.45,193.90 273.52,194.08 275.60,194.25 277.68,194.42 279.75,194.58 281.83,194.74 283.91,194.89 285.98,195.05 288.06,195.19 290.14,195.33 292.21,195.47 294.29,195.60 296.37,195.73 298.44,195.85 300.52,195.96 302.60,196.08 304.67,196.18 306.75,196.28 308.82,196.38 310.90,196.46 312.98,196.55 315.05,196.62 317.13,196.69 319.21,196.76 321.28,196.82 323.36,196.87 325.44,196.92 327.51,196.95 329.59,196.99 331.67,197.01 333.74,197.03 335.82,197.04 337.90,197.04 339.97,197.04 342.05,197.03 344.13,197.01 346.20,196.99 348.28,196.95 350.36,196.91 352.43,196.86 354.51,196.81 356.58,196.74 358.66,196.67 360.74,196.58 362.81,196.49 364.89,196.39 366.97,196.29 369.04,196.17 371.12,196.04 373.20,195.91 375.27,195.77 377.35,195.61 379.43,195.45 381.50,195.28 383.58,195.10 385.66,194.91 387.73,194.70 389.81,194.49 391.88,194.27 393.96,194.04 396.04,193.80 398.11,193.55 400.19,193.29 402.27,193.01 404.34,192.73 406.42,192.43 408.50,192.13 410.57,191.81 412.65,191.49 414.73,191.15 416.80,190.80 418.88,190.44 420.96,190.06 423.03,189.68 425.11,189.28 427.19,188.87 429.26,188.45 431.34,188.02 433.41,187.57 435.49,187.12 437.57,186.65 439.64,186.16 441.72,185.67 443.80,185.16 445.87,184.64 447.95,184.11 450.03,183.56 452.10,183.00 454.18,182.43 456.26,181.84 458.33,181.24 460.41,180.63 462.49,180.00 464.56,179.36 466.64,178.70 468.72,178.03 470.79,177.35 472.87,176.65 474.94,175.94 477.02,175.21 479.10,174.47 481.17,173.71 483.25,172.94 485.33,172.15 487.40,171.35 489.48,170.53 491.56,169.70 493.63,168.85 495.71,167.99 497.79,167.11 499.86,166.22 501.94,165.31 504.02,164.38 506.09,163.44 508.17,162.48 510.25,161.50 512.32,160.51 514.40,159.51 516.47,158.48 518.55,157.44 520.63,156.38 522.70,155.31 524.78,154.21 526.86,153.10 528.93,151.98 531.01,150.83 533.09,149.67 535.16,148.49 537.24,147.30 539.32,146.08 541.39,144.85 543.47,143.60 545.55,142.33 547.62,141.04 549.70,139.73 551.78,138.41 553.85,137.07 555.93,135.70 558.00,134.32 560.08,132.92 562.16,131.51 564.23,130.07 566.31,128.61 568.39,127.13 570.46,125.64 572.54,124.12 574.62,122.59 576.69,121.03 578.77,119.46 580.85,117.86 582.92,116.25 585.00,114.61 587.08,112.96 589.15,111.28 591.23,109.58 593.31,107.86 595.38,106.13 597.46,104.37 599.53,102.59 601.61,100.78 603.69,98.96 605.76,97.12 607.84,95.25 609.92,93.36 611.99,91.45 614.07,89.52 616.15,87.57 618.22,85.60 620.30,83.60" fill="none" stroke="#c22e38" stroke-width="1.05"/>
<path d="M205.0 186.4H620.3" stroke="#f0f0f0" stroke-width="1.5"/>
<path d="M438.6 83.5V289.4" stroke="#e08a18" stroke-width="1.6" stroke-dasharray="3.2,1.8"/>
</g>
<text transform="translate(436.8,184) rotate(-90)" font-size="7.8" fill="#d8861a" fill-opacity="0.95" textLength="72" lengthAdjust="spacingAndGlyphs">Transmitter flow limit</text>
<circle cx="438.6" cy="186.4" r="3.3" fill="#ff1010" stroke="#ffffff" stroke-opacity="0.85" stroke-width="0.9"/>
<rect x="205.0" y="83.5" width="415.3" height="205.9" fill="none" stroke="#cfcfcf" stroke-width="1"/>
<path d="M205.0 289.4v3.5M251.1 289.4v3.5M297.3 289.4v3.5M343.4 289.4v3.5M389.6 289.4v3.5M435.7 289.4v3.5M481.9 289.4v3.5M528.0 289.4v3.5M574.2 289.4v3.5M620.3 289.4v3.5M205.0 284.9h-3.5M205.0 252.1h-3.5M205.0 219.2h-3.5M205.0 186.4h-3.5M205.0 153.6h-3.5M205.0 120.7h-3.5M205.0 87.9h-3.5" stroke="#cfcfcf" stroke-width="0.8"/>
<text x="205.0" y="300" font-size="8.2" fill="#e6e6e6" text-anchor="middle">67</text>
<text x="251.1" y="300" font-size="8.2" fill="#e6e6e6" text-anchor="middle">764</text>
<text x="297.3" y="300" font-size="8.2" fill="#e6e6e6" text-anchor="middle">1462</text>
<text x="343.4" y="300" font-size="8.2" fill="#e6e6e6" text-anchor="middle">2160</text>
<text x="389.6" y="300" font-size="8.2" fill="#e6e6e6" text-anchor="middle">2858</text>
<text x="435.7" y="300" font-size="8.2" fill="#e6e6e6" text-anchor="middle">3556</text>
<text x="481.9" y="300" font-size="8.2" fill="#e6e6e6" text-anchor="middle">4254</text>
<text x="528.0" y="300" font-size="8.2" fill="#e6e6e6" text-anchor="middle">4952</text>
<text x="574.2" y="300" font-size="8.2" fill="#e6e6e6" text-anchor="middle">5649</text>
<text x="620.3" y="300" font-size="8.2" fill="#e6e6e6" text-anchor="middle">6347</text>
<text x="200.5" y="287.8" font-size="8.2" fill="#e6e6e6" text-anchor="end">−300</text>
<text x="200.5" y="255.0" font-size="8.2" fill="#e6e6e6" text-anchor="end">−200</text>
<text x="200.5" y="222.1" font-size="8.2" fill="#e6e6e6" text-anchor="end">−100</text>
<text x="200.5" y="189.3" font-size="8.2" fill="#e6e6e6" text-anchor="end">0</text>
<text x="200.5" y="156.5" font-size="8.2" fill="#e6e6e6" text-anchor="end">100</text>
<text x="200.5" y="123.6" font-size="8.2" fill="#e6e6e6" text-anchor="end">200</text>
<text x="200.5" y="90.8" font-size="8.2" fill="#e6e6e6" text-anchor="end">300</text>
<text x="388" y="310.5" font-size="9.2" fill="#e6e6e6" textLength="49" lengthAdjust="spacingAndGlyphs">Flow [kg/h]</text>
<text transform="translate(176.3,246.5) rotate(-90)" font-size="9.2" fill="#e6e6e6" textLength="121" lengthAdjust="spacingAndGlyphs">Absolute uncertainty [kg/h]</text>
<rect x="419" y="240" width="197.6" height="45.7" rx="2" fill="#0a0d14" fill-opacity="0.9" stroke="#9a9a9a" stroke-width="0.8"/>
<path d="M421.6 246H437" stroke="#4a72e8" stroke-width="1.2"/>
<rect x="421.6" y="254" width="15.4" height="6" fill="#7a4a15" stroke="#f0900a" stroke-width="0.5"/>
<path d="M421.6 268H437" stroke="#a8202c" stroke-width="1.2"/>
<circle cx="429.4" cy="279.4" r="3" fill="#ff1a1a"/>
<text x="442.6" y="248.4" font-size="7.9" fill="#eeeeee" textLength="117.5" lengthAdjust="spacingAndGlyphs">Uncertainty (model-only) [kg/h]</text>
<text x="442.6" y="259.7" font-size="7.9" fill="#eeeeee" textLength="137" lengthAdjust="spacingAndGlyphs">Total uncertainty (within transmitter)</text>
<text x="442.6" y="271.0" font-size="7.9" fill="#eeeeee" textLength="68.1" lengthAdjust="spacingAndGlyphs">Linear Error [kg/h]</text>
<text x="442.6" y="282.3" font-size="7.9" fill="#eeeeee" textLength="170.6" lengthAdjust="spacingAndGlyphs">Designed point: 3600.00 kg/h ± 50.3054 kg/h</text>
<text x="640" y="77.8" font-size="11.5" fill="#f2f2f2" textLength="19.3" lengthAdjust="spacingAndGlyphs">Abs</text>
<rect x="663.3" y="59" width="49.7" height="28" rx="14" fill="#575a70"/>
<circle cx="677" cy="72.8" r="10.9" fill="#eef0fc"/>
<text x="717.4" y="77.8" font-size="11.5" fill="#f2f2f2" textLength="15.6" lengthAdjust="spacingAndGlyphs">Rel</text>
</svg>
<svg class="abs" style="left:752px;top:51px" width="332" height="268" viewBox="752 51 332 268" font-family="Liberation Sans, sans-serif">
<defs><pattern id="hf" width="4.2" height="20" patternUnits="userSpaceOnUse" patternTransform="rotate(45)"><line x1="2" y1="0" x2="2" y2="20" stroke="#dcdcdc" stroke-width="0.85"/></pattern><pattern id="hb" width="4.2" height="20" patternUnits="userSpaceOnUse" patternTransform="rotate(-45)"><line x1="2" y1="0" x2="2" y2="20" stroke="#dcdcdc" stroke-width="0.85"/></pattern><pattern id="hp" width="3.8" height="20" patternUnits="userSpaceOnUse" patternTransform="rotate(40)"><line x1="1.9" y1="0" x2="1.9" y2="20" stroke="#c8c8c8" stroke-width="0.75"/></pattern></defs>
<polygon points="807.5,101.4 814.7,101.4 814.7,144.0 810.9,148.3 810.9,227.3 814.7,231.6 814.7,274.9 807.5,274.9" fill="url(#hp)" stroke="#c8c8c8" stroke-width="0.9"/>
<path d="M807.5 77.3V101.4M814.7 77.3V101.4M793.4 85.5H828.4M752 132.5H805.7M816.5 132.5H846.5M805.7 125.2V132.5M816.5 125.2V132.5M752 243.1H805.7M816.5 243.1H846.5M805.7 243.1V250.3M816.5 243.1V250.3M775.8 148.3H864.5M775.8 227.3H807.5M810.4 148.3L847.9 110.5M762.8 132.5V243.1M778.7 148.3V227.3M793.1 170.6H827.7M810.9 226.5L827 210.7M815.5 228.7L824.8 220.8M799.6 235.2L807.5 227.3M955.5 76.2V101.4M971.1 76.2V101.4M946.2 79.6H978.8M985.5 85.8V101.4M990 85.8V101.4M976 88.6H1000.1M925.6 78L962 101M925.6 78L987.2 100.9M1010.2 94.2L996.7 104.3M1035.8 109V124.9M1028.6 109H1041M1028.6 124.9H1051.6M1028.6 132.8H1051.6M1047.3 118.4V138.6M1035.8 132.8V154.4M908.3 146.8H950.1M951.1 132.8V168.1M968.1 132.3V207.8M999.7 132.8V168.1M951.1 161.3H968.1M974.5 161.3H999.7M962.2 200.6H991.8M983.7 274.4V290M987.5 274.4V290M974.6 285.7H1002.7" stroke="#c8c8c8" stroke-width="0.8" fill="none"/>
<path d="M752 132.5H805.7M816.5 132.5H846.5M752 243.1H805.7M816.5 243.1H846.5" stroke="#d8d8d8" stroke-width="1.15" fill="none"/>
<path d="M843.6 116.7A46.5 46.5 0 0 1 857 148.3" stroke="#c8c8c8" stroke-width="0.8" fill="none"/>
<g fill="#e0e0e0"><circle cx="807.5" cy="85.5" r="0.9"/><circle cx="814.7" cy="85.5" r="0.9"/><circle cx="810.9" cy="170.6" r="0.9"/><circle cx="807.5" cy="170.6" r="0.9"/><circle cx="762.8" cy="134.0" r="0.9"/><circle cx="762.8" cy="241.7" r="0.9"/><circle cx="778.7" cy="149.8" r="0.9"/><circle cx="778.7" cy="225.8" r="0.9"/><circle cx="857.0" cy="147.3" r="0.9"/><circle cx="843.9" cy="117.3" r="0.9"/><circle cx="955.5" cy="79.6" r="0.9"/><circle cx="971.1" cy="79.6" r="0.9"/><circle cx="985.5" cy="88.6" r="0.9"/><circle cx="990.0" cy="88.6" r="0.9"/><circle cx="1035.8" cy="110.5" r="0.9"/><circle cx="1035.8" cy="123.4" r="0.9"/><circle cx="1047.3" cy="124.9" r="0.9"/><circle cx="1047.3" cy="132.8" r="0.9"/><circle cx="950.1" cy="146.8" r="0.9"/><circle cx="951.1" cy="161.3" r="0.9"/><circle cx="968.1" cy="161.3" r="0.9"/><circle cx="974.5" cy="161.3" r="0.9"/><circle cx="999.7" cy="161.3" r="0.9"/><circle cx="968.1" cy="200.6" r="0.9"/><circle cx="971.2" cy="200.6" r="0.9"/><circle cx="983.7" cy="285.7" r="0.9"/><circle cx="987.5" cy="285.7" r="0.9"/></g>
<path d="M789.8 187.6H996.8" stroke="#a4a4a4" stroke-width="1.9" stroke-dasharray="5,2.6"/>
<path d="M1015.6 188H1043.5" stroke="#f0f0f0" stroke-width="1.6"/><polygon points="1043,184.8 1048.5,188 1043,191.2" fill="#f0f0f0"/>
<polygon points="880.1,101.4 950.7,101.4 950.7,132.8 880.1,132.8" fill="url(#hf)" stroke="#c8c8c8" stroke-width="0.9"/>
<polygon points="950.7,101.4 955.8,101.4 955.8,132.8 950.7,132.8" fill="url(#hb)" stroke="#c8c8c8" stroke-width="0.9"/>
<polygon points="955.8,101.4 961.4,101.4 961.4,109.3 955.8,109.3" fill="url(#hb)" stroke="#c8c8c8" stroke-width="0.9"/>
<polygon points="964.4,101.4 971.1,101.4 971.1,109.3 964.4,109.3" fill="url(#hb)" stroke="#c8c8c8" stroke-width="0.9"/>
<polygon points="955.8,125.0 968.1,125.0 968.1,132.8 955.8,132.8" fill="url(#hb)" stroke="#c8c8c8" stroke-width="0.9"/>
<polygon points="978.5,101.4 985.5,101.4 985.5,109.3 978.5,109.3" fill="url(#hb)" stroke="#c8c8c8" stroke-width="0.9"/>
<polygon points="990.0,101.4 994.7,101.4 994.7,109.3 990.0,109.3" fill="url(#hb)" stroke="#c8c8c8" stroke-width="0.9"/>
<polygon points="994.7,101.4 999.7,101.4 999.7,132.8 994.7,132.8" fill="url(#hb)" stroke="#c8c8c8" stroke-width="0.9"/>
<polygon points="982.1,125.0 994.7,125.0 994.7,132.8 982.1,132.8" fill="url(#hb)" stroke="#c8c8c8" stroke-width="0.9"/>
<polygon points="999.7,101.4 1028.6,101.4 1028.6,132.8 999.7,132.8" fill="url(#hf)" stroke="#c8c8c8" stroke-width="0.9"/>
<polygon points="971.1,101.4 978.6,101.4 978.6,141.4 974.5,148.7 974.5,228.0 979.3,233.0 979.3,274.4 971.1,274.4" fill="url(#hp)" stroke="#c8c8c8" stroke-width="0.9"/>
<polygon points="879.4,242.4 968.8,242.4 965.2,274.4 879.4,274.4" fill="url(#hf)" stroke="#c8c8c8" stroke-width="0.9"/>
<polygon points="968.8,242.4 971.1,242.4 971.1,274.4 965.2,274.4" fill="url(#hb)" stroke="#c8c8c8" stroke-width="0.6"/>
<polygon points="979.3,242.4 980.3,242.4 984.0,274.4 979.3,274.4" fill="url(#hb)" stroke="#c8c8c8" stroke-width="0.6"/>
<polygon points="982.5,242.4 1052.0,242.4 1052.0,274.4 987.5,274.4" fill="url(#hf)" stroke="#c8c8c8" stroke-width="0.9"/>
<path d="M980.3 242.4L984 274.4M982.5 242.4L987.5 274.4" stroke="#c8c8c8" stroke-width="0.8"/>
<path d="M962.3 95V114M988 95V114" stroke="#d0d0d0" stroke-width="0.8" stroke-dasharray="2.2,1.2"/>
<text x="815.5" y="82.8" font-size="6.2" fill="#e2e2e2" textLength="59.5" lengthAdjust="spacingAndGlyphs">1.0 mm ≤ E ≤ 10.0 mm</text>
<text x="850.3" y="129.2" font-size="6.2" fill="#e2e2e2" textLength="24.5" lengthAdjust="spacingAndGlyphs">α 45°±15°</text>
<text x="810.4" y="168.3" font-size="6.2" fill="#e2e2e2" textLength="57" lengthAdjust="spacingAndGlyphs">1.0 mm ≤ e ≤ 4.0 mm</text>
<text x="826.3" y="212.3" font-size="6.2" fill="#e2e2e2" textLength="25.2" lengthAdjust="spacingAndGlyphs">H 0.08mm</text>
<text x="824.1" y="223.9" font-size="6.2" fill="#e2e2e2" textLength="23.8" lengthAdjust="spacingAndGlyphs">I 0.08mm</text>
<text x="776.8" y="239" font-size="6.2" fill="#e2e2e2" textLength="26.4" lengthAdjust="spacingAndGlyphs">G 0.08mm</text>
<text x="753.7" y="288" font-size="6.2" fill="#e2e2e2" textLength="101.3" lengthAdjust="spacingAndGlyphs">*Cross-sectional area of g•h ≥ ¼•π•a²/4</text>
<text x="759" y="295.3" font-size="6.2" fill="#e2e2e2" textLength="76" lengthAdjust="spacingAndGlyphs">b: 200.0 mm ≤ b ≤ 208.0 mm</text>
<text transform="translate(760.6,185.5) rotate(-90)" font-size="6.2" fill="#e2e2e2" text-anchor="middle" textLength="32" lengthAdjust="spacingAndGlyphs">D 200.0 mm</text>
<text transform="translate(775.4,185.4) rotate(-90)" font-size="6.2" fill="#e2e2e2" text-anchor="middle" textLength="33" lengthAdjust="spacingAndGlyphs">d 127.41 mm</text>
<text x="882.3" y="78.2" font-size="6.2" fill="#e2e2e2" textLength="40.4" lengthAdjust="spacingAndGlyphs">3. Impulse ports</text>
<text x="961.8" y="79" font-size="6.2" fill="#e2e2e2" textLength="4" lengthAdjust="spacingAndGlyphs">g</text>
<text x="988.9" y="86.2" font-size="6.2" fill="#e2e2e2" textLength="48.3" lengthAdjust="spacingAndGlyphs">4 mm ≤ j ≤ 10 mm</text>
<text x="1010.5" y="97" font-size="6.2" fill="#e2e2e2" textLength="41.4" lengthAdjust="spacingAndGlyphs">4. Retaining ring</text>
<text transform="translate(1034.5,117.5) rotate(-90)" font-size="6.2" fill="#e2e2e2" text-anchor="middle" textLength="4" lengthAdjust="spacingAndGlyphs">h</text>
<text transform="translate(1032.4,144.3) rotate(-90)" font-size="6.2" fill="#e2e2e2" text-anchor="middle" textLength="4.5" lengthAdjust="spacingAndGlyphs">b</text>
<text transform="translate(1045,147) rotate(-90)" font-size="6.2" fill="#e2e2e2" text-anchor="middle" textLength="12" lengthAdjust="spacingAndGlyphs">f ≥ 2a</text>
<text x="910.9" y="145.3" font-size="6.2" fill="#e2e2e2" textLength="32" lengthAdjust="spacingAndGlyphs">s(min) 8.8 m</text>
<text x="953.7" y="158.7" font-size="6.2" fill="#e2e2e2" textLength="10.8" lengthAdjust="spacingAndGlyphs">c'≈c</text>
<text x="976.8" y="158.7" font-size="6.2" fill="#e2e2e2" textLength="25" lengthAdjust="spacingAndGlyphs">≤ 0.1 mm</text>
<text x="881.6" y="169" font-size="6.2" fill="#e2e2e2" textLength="41.1" lengthAdjust="spacingAndGlyphs">1. Retaining ring</text>
<text x="885.9" y="177.7" font-size="6.2" fill="#e2e2e2" textLength="32.5" lengthAdjust="spacingAndGlyphs">with ring gap</text>
<text x="882.6" y="209.4" font-size="6.2" fill="#e2e2e2" textLength="56.7" lengthAdjust="spacingAndGlyphs">2. Single impulse ports</text>
<text x="1013.4" y="181.3" font-size="6.4" fill="#f2f2f2" textLength="34.6" lengthAdjust="spacingAndGlyphs">Flow direction</text>
<text x="975.2" y="198.6" font-size="6.2" fill="#e2e2e2" textLength="15" lengthAdjust="spacingAndGlyphs">a' = a</text>
<text x="988.3" y="282.3" font-size="6.2" fill="#e2e2e2" textLength="55.9" lengthAdjust="spacingAndGlyphs">1.0 mm ≤ a ≤ 6.0 mm</text>
</svg>
<div class="abs gb" style="left:81px;top:352px;width:318px;height:212px"></div>
<div class="gbt" style="left:81px;top:346px;height:14px;line-height:14px">Fluid Data</div>
<div class="row" style="left:91px;top:364.0px">Fluid:</div>
<div class="row" style="left:243px;top:364.0px;letter-spacing:-0.35px">air</div>
<div class="row" style="left:91px;top:386.0px">Temp (°C):</div>
<div class="row" style="left:243px;top:386.0px;letter-spacing:-0.6px">20.0</div>
<div class="row" style="left:91px;top:408.0px">Pressure (Pa):</div>
<div class="row" style="left:243px;top:408.0px;letter-spacing:-0.6px">101325.0</div>
<div class="row" style="left:91px;top:430.0px">Humidity (%):</div>
<div class="row" style="left:243px;top:430.0px;letter-spacing:-0.6px">0.0</div>
<div class="row" style="left:91px;top:452.0px">Working density (kg/m³):</div>
<div class="row" style="left:243px;top:452.0px;letter-spacing:-0.6px">1.205</div>
<div class="row" style="left:91px;top:474.0px">Normal density (kg/m³):</div>
<div class="row" style="left:243px;top:474.0px;letter-spacing:-0.6px">1.293</div>
<div class="row" style="left:91px;top:496.0px">Viscosity (Pa·s):</div>
<div class="row" style="left:243px;top:496.0px;letter-spacing:-0.6px">0.000018</div>
<div class="row" style="left:91px;top:518.0px">Isentropic exponent (-):</div>
<div class="row" style="left:243px;top:518.0px;letter-spacing:-0.6px">1.4</div>
<div class="row" style="left:91px;top:540.0px">Compressibility factor (-):</div>
<div class="row" style="left:243px;top:540.0px;letter-spacing:-0.6px">1.0002</div>
<div class="abs gb" style="left:419px;top:352px;width:318px;height:212px"></div>
<div class="gbt" style="left:419px;top:346px;height:14px;line-height:14px">Orifice Configuration</div>
<div class="row" style="left:429px;top:364.0px">Orifice Type:</div>
<div class="row" style="left:585px;top:364.0px;letter-spacing:-0.35px">Corner Taps</div>
<div class="row" style="left:429px;top:386.0px">Duct material:</div>
<div class="row" style="left:585px;top:386.0px;letter-spacing:-0.35px">Carbon Steel</div>
<div class="row" style="left:429px;top:408.0px">Orifice material:</div>
<div class="row" style="left:585px;top:408.0px;letter-spacing:-0.35px">Carbon Steel</div>
<div class="row" style="left:429px;top:430.0px">Duct Ø (mm):</div>
<div class="row" style="left:585px;top:430.0px;letter-spacing:-0.6px">200.0</div>
<div class="row" style="left:429px;top:452.0px">Orifice Ø (m):</div>
<div class="row" style="left:585px;top:452.0px;letter-spacing:-0.6px">0.13</div>
<div class="row" style="left:429px;top:474.0px">Flow Rate (kg/h):</div>
<div class="row" style="left:585px;top:474.0px;letter-spacing:-0.6px">3600</div>
<div class="row" style="left:429px;top:496.0px">ΔP (Pa):</div>
<div class="row" style="left:585px;top:496.0px;letter-spacing:-0.6px">6000.0</div>
<div class="row" style="left:429px;top:518.0px;letter-spacing:-0.13px">Required upstream L (m):</div>
<div class="row" style="left:585px;top:518.0px;letter-spacing:-0.6px">8.80</div>
<div class="row" style="left:429px;top:540.0px;letter-spacing:-0.1px">Required downstream L (m):</div>
<div class="row" style="left:585px;top:540.0px;letter-spacing:-0.6px">1.40</div>
<div class="abs gb" style="left:757px;top:352px;width:318px;height:212px"></div>
<div class="gbt" style="left:757px;top:346px;height:14px;line-height:14px">Flow Parameters</div>
<div class="row" style="left:767px;top:367.0px">Reynolds:</div>
<div class="row" style="left:928px;top:367.0px;letter-spacing:-0.6px">350955</div>
<div class="row" style="left:767px;top:396.6px">Velocity (m/s):</div>
<div class="row" style="left:928px;top:396.6px;letter-spacing:-0.6px">26.42</div>
<div class="row" style="left:767px;top:424.2px;letter-spacing:-0.32px">Permanent pressure loss (Pa):</div>
<div class="row" style="left:928px;top:424.2px;letter-spacing:-0.6px">3522.0</div>
<div class="row" style="left:767px;top:451.8px">Cd:</div>
<div class="row" style="left:928px;top:451.8px;letter-spacing:-0.6px">0.607</div>
<div class="row" style="left:767px;top:480.6px">Expansibility factor:</div>
<div class="row" style="left:928px;top:480.6px;letter-spacing:-0.6px">0.9822</div>
<div class="row" style="left:767px;top:509.6px">Diameter ratio:</div>
<div class="row" style="left:928px;top:509.6px;letter-spacing:-0.6px">0.637</div>
<div class="row" style="left:767px;top:537.5px">Total Uncertainty (%):</div>
<div class="row" style="left:928px;top:537.5px;letter-spacing:-0.6px">1.40</div>
<div id="status" class="abs"></div>
<div id="stext" class="abs">Calculation completed successfully!</div>
<div class="btn" style="left:774px">Back</div>
<div class="btn" style="left:882px">Save</div>
<div class="btn" style="left:990px">Print</div>
</body></html>
